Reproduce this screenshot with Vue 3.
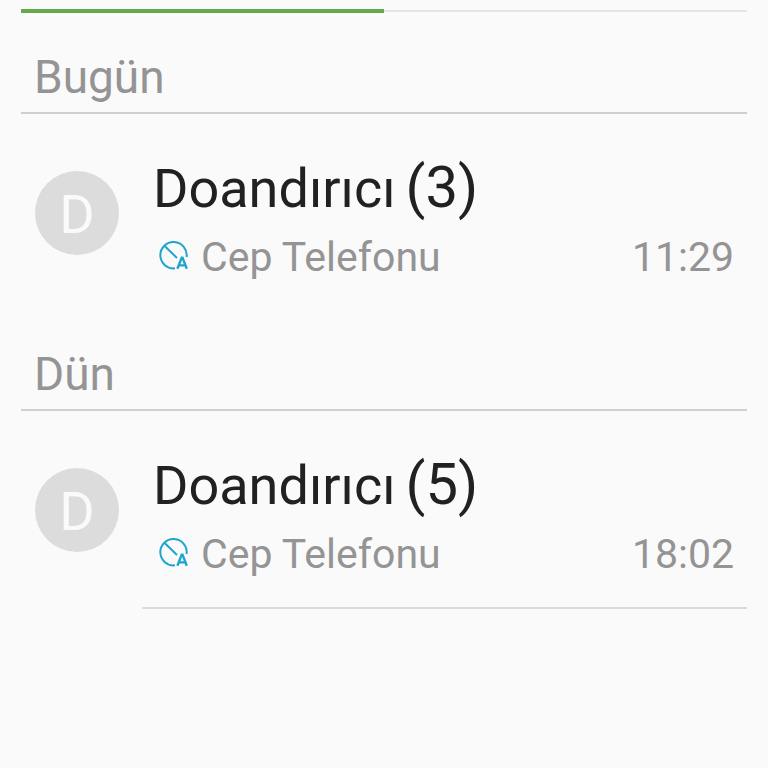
<script setup>
import { ref } from "vue";

const activeTab = ref(0);
const groups = ref([
  {
    title: "Bugün",
    calls: [{ name: "Doandırıcı", count: 3, type: "Cep Telefonu", time: "11:29" }],
  },
  {
    title: "Dün",
    calls: [{ name: "Doandırıcı", count: 5, type: "Cep Telefonu", time: "18:02" }],
  },
]);
</script>

<template>
  <main class="call-log">
    <div class="tabs">
      <div
        v-for="tab in 2"
        :key="tab"
        class="tab"
        :class="{ active: activeTab === tab - 1 }"
      ></div>
    </div>

    <section v-for="group in groups" :key="group.title" class="group">
      <h2>{{ group.title }}</h2>
      <ul>
        <li v-for="call in group.calls" :key="call.time" class="call">
          <div class="avatar">{{ call.name[0] }}</div>
          <div class="call-data">
            <h3>
              <span>{{ call.name }}</span>
              <span class="count">({{ call.count }})</span>
            </h3>
            <div class="call-details">
              <svg class="blocked" viewBox="0 0 30 30" aria-hidden="true">
                <path d="M16 28.3A13.2 13.2 0 1 1 27.6 17" />
                <path d="M5.4 5.8L18 18" />
                <path class="letter" d="M18.4 28.8L22.7 17.6H23.5L27.8 28.8M20 25.4H26.2" />
              </svg>
              <span>{{ call.type }}</span>
              <time>{{ call.time }}</time>
            </div>
          </div>
        </li>
      </ul>
    </section>
  </main>
</template>

<style>
body {
  margin: 0;
  background-color: #fafafa;
}
</style>

<style scoped>
.call-log {
  padding: 9px 21px 0;
  font-family: Roboto, sans-serif;
  color: #949494;
}
.tabs {
  display: flex;
  align-items: center;
}
.tab {
  flex: 1;
  height: 2px;
  background-color: #e4e4e4;
}
.tab.active {
  height: 4px;
  background-color: #66a84c;
}
h2 {
  margin: 0;
  padding: 37px 13px 8px;
  border-bottom: 2px solid #d0d0d0;
  font-size: 46px;
  line-height: 54px;
  font-weight: 400;
}
ul {
  margin: 0;
  padding: 0;
  list-style: none;
}
.call {
  display: flex;
  padding-left: 14px;
}
.avatar {
  display: flex;
  justify-content: center;
  flex-shrink: 0;
  width: 84px;
  height: 84px;
  margin-top: 57px;
  border-radius: 50%;
  background-color: #dcdcdc;
  color: #fafafa;
  font-size: 54px;
  line-height: 88px;
}
.call-data {
  flex: 1;
  margin-left: 23px;
  padding: 41px 13px 28px 11px;
}
.group:last-child .call:last-child .call-data {
  border-bottom: 2px solid #dadada;
}
h3 {
  display: flex;
  align-items: baseline;
  gap: 10px;
  height: 64px;
  margin: 0 0 13px;
  color: #212121;
  font-size: 54px;
  line-height: 64px;
  font-weight: 400;
}
.count {
  font-size: 58px;
}
.call-details {
  display: flex;
  align-items: center;
  font-size: 41px;
  line-height: 50px;
}
.blocked {
  width: 30px;
  height: 30px;
  margin: 0 12px 4px 6px;
  fill: none;
  stroke: #1fa5cb;
  stroke-width: 2;
}
.blocked .letter {
  stroke-width: 2.4;
}
time {
  margin-left: auto;
}
</style>
